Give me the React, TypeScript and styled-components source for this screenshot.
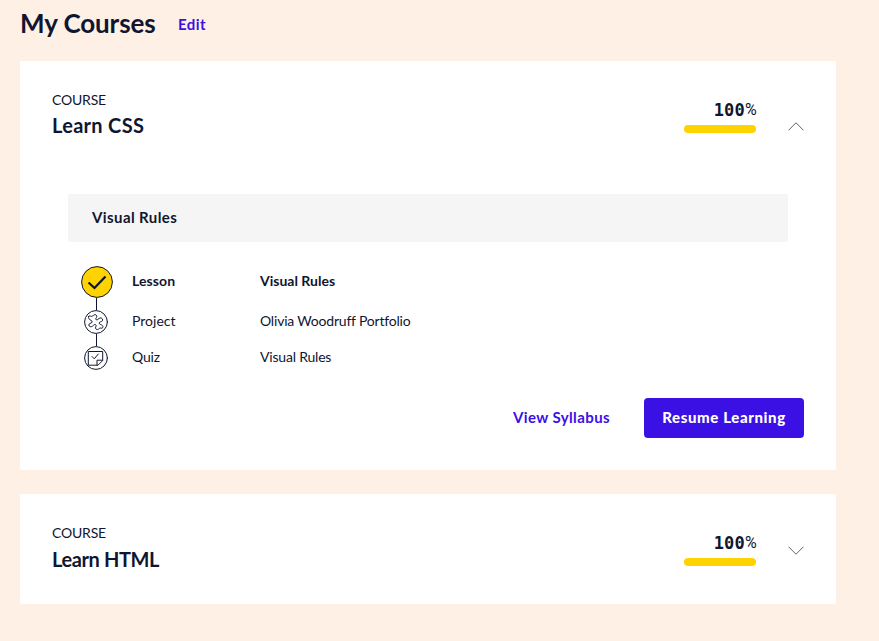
import React from 'react';
import styled, { createGlobalStyle } from 'styled-components';

const navy = '#10162f';
const blue = '#3a10e5';
const yellow = '#ffd300';

const GlobalStyle = createGlobalStyle`
  * { box-sizing: border-box; }
  body {
    margin: 0;
    background: #fff0e5;
    color: ${navy};
    font-family: Lato, "Liberation Sans", sans-serif;
  }
`;

const Page = styled.main`
  width: 879px;
  height: 641px;
  padding: 0 43px 0 20px;
  overflow: hidden;
`;

const Text = styled.span<{ $size: number; $weight?: number; $spacing?: number }>`
  font-size: ${p => p.$size}px;
  font-weight: ${p => p.$weight ?? 400};
  letter-spacing: ${p => p.$spacing ?? 0}px;
  white-space: nowrap;
`;

const Heading = styled.header`
  display: flex;
  align-items: center;
  height: 61px;
  padding-bottom: 13px;
`;

const Title = styled(Text)`
  width: 158px;
  margin: 0;
  padding-bottom: 2px;
  line-height: 46px;
`;

const LinkText = styled(Text)`
  color: ${blue};
`;

const Card = styled.section<{ $height: number }>`
  height: ${p => p.$height}px;
  margin-bottom: 24px;
  padding: 0 32px;
  background: #fff;
  border-radius: 2px;
`;

const CardHeader = styled.div<{ $open: boolean }>`
  display: flex;
  height: 110px;
  padding-top: 30px;
  margin-bottom: ${p => (p.$open ? 23 : 0)}px;
`;

const CourseName = styled.div<{ $gap: number }>`
  display: flex;
  flex: 1;
  flex-direction: column;
  line-height: 18px;
  gap: ${p => p.$gap}px;
`;

const Progress = styled.div`
  display: flex;
  flex-direction: column;
  align-items: flex-end;
  width: 72px;
  padding-top: 9px;
`;

const Percent = styled.span`
  display: flex;
  height: 25px;
  font: 700 17px/20px "DejaVu Sans Mono", monospace;
  letter-spacing: 0.2px;
`;

const PercentSign = styled.span`
  width: 11px;
  font: 400 16px/20px Roboto, sans-serif;
  letter-spacing: -1px;
`;

const Bar = styled.div`
  width: 72px;
  height: 8px;
  border-radius: 4px;
  background: ${yellow};
`;

const Chevron = styled.svg<{ $open: boolean }>`
  width: 16px;
  height: 9px;
  margin: ${p => (p.$open ? 31 : 22)}px 0 0 32px;
  fill: none;
  stroke: #5f626d;
  transform: ${p => (p.$open ? 'none' : 'scaleY(-1)')};
`;

const ModuleTitle = styled.h3`
  display: flex;
  align-items: center;
  height: 48px;
  margin: 0 16px 24px;
  padding: 0 0 2px 24px;
  background: #f5f5f5;
  border-radius: 2px;
`;

const Lessons = styled.div`
  display: grid;
  grid-template-columns: 32px 109px 1fr;
  column-gap: 19px;
  margin-left: 29px;
`;

const Steps = styled.div`
  display: flex;
  flex-direction: column;
  align-items: center;
`;

const CompletedIcon = styled.svg`
  display: block;
  width: 32px;
  height: 32px;
  fill: none;
  stroke: ${navy};
`;

const Connector = styled.div`
  width: 1px;
  height: 12px;
  margin-right: 1px;
  background: ${navy};
`;

const SmallIcon = styled.svg`
  display: block;
  width: 24px;
  height: 24px;
  margin-right: 2px;
  fill: none;
  stroke: ${navy};
  stroke-linejoin: round;
  stroke-linecap: round;
`;

const Column = styled.div`
  display: grid;
  grid-template-rows: 28px 52px 20px;
  align-items: center;
  height: 104px;
`;

const Actions = styled.div`
  display: flex;
  align-items: center;
  justify-content: flex-end;
  gap: 34px;
  margin-top: 28px;
`;

const SyllabusLink = styled(LinkText)`
  padding-bottom: 2px;
`;

const ResumeButton = styled.button`
  width: 160px;
  height: 40px;
  padding: 0 0 2px;
  border: 0;
  border-radius: 4px;
  color: #fff;
  background: ${blue};
  font-family: inherit;
`;

function CourseHeader({ name, open = false, spacing }: { name: string; open?: boolean; spacing: number }) {
  return (
    <CardHeader $open={open}>
      <CourseName $gap={open ? 7 : 8}>
        <Text $size={14} $spacing={-0.2}>COURSE</Text>
        <Text $size={20} $weight={700} $spacing={spacing}>{name}</Text>
      </CourseName>
      <Progress>
        <Percent>100<PercentSign>%</PercentSign></Percent>
        <Bar />
      </Progress>
      <Chevron $open={open} viewBox="0 0 16 9"><path d="M.5 8.3 8 .8l7.5 7.5" /></Chevron>
    </CardHeader>
  );
}

export default function App() {
  return (
    <>
      <GlobalStyle />
      <Page>
        <Heading>
          <Title as="h1" $size={26} $weight={700} $spacing={-0.1}>My Courses</Title>
          <LinkText $size={15} $weight={700} $spacing={0.4}>Edit</LinkText>
        </Heading>
        <Card $height={409}>
          <CourseHeader name="Learn CSS" open spacing={0.3} />
          <ModuleTitle><Text $size={15} $weight={700} $spacing={0.4}>Visual Rules</Text></ModuleTitle>
          <Lessons>
            <Steps>
              <CompletedIcon viewBox="0 0 32 32">
                <circle cx="16" cy="16" r="15.4" fill={yellow} />
                <path d="m7.5 16.5 6 5.5L24.5 10.5" strokeWidth="2.3" />
              </CompletedIcon>
              <Connector />
              <SmallIcon viewBox="0 0 24 24">
                <circle cx="12" cy="12" r="11.4" />
                <path d="M4.6 6.4C5.7 4.9 7.4 7.2 8.8 6C9.4 5.2 10.8 4.1 12.1 5C13.6 6.1 12.6 7.3 11.9 8.3C11.3 9.6 12.8 10.6 14 9.4C15.2 7.8 17.1 7.3 18.3 8.8C19.4 10.5 17.9 11.6 16.5 11.8C14.7 12.2 14.9 14 16.3 14.4C18 14.9 19.5 16 18.8 17.5C17.9 19.3 16.4 17.2 15.3 18.4C14.3 19.6 12.9 20.1 11.8 18.8C10.9 17.5 12.4 16.4 12.1 15.3C11.5 13.9 10.1 14.4 9.4 15.4C8.3 16.6 6.4 17.4 5.2 16C4.1 14.4 5.7 13.4 7 13C8.6 12.4 8.6 11.2 7.2 10.6C5.7 9.9 3.9 8.2 4.6 6.4Z" />
              </SmallIcon>
              <Connector />
              <SmallIcon viewBox="0 0 24 24">
                <circle cx="12" cy="12" r="11.4" />
                <path d="M4.7 5.5h14v9L14 19.2H4.7Zm8.3 13.5v-4.8h5.5M8 10.5l2.3 2.3 4-4.8" />
              </SmallIcon>
            </Steps>
            <Column>
              <Text $size={14} $weight={700} $spacing={0.1}>Lesson</Text>
              <Text $size={14}>Project</Text>
              <Text $size={14} $spacing={-0.2}>Quiz</Text>
            </Column>
            <Column>
              <Text $size={14} $weight={700}>Visual Rules</Text>
              <Text $size={14} $spacing={-0.2}>Olivia Woodruff Portfolio</Text>
              <Text $size={14} $spacing={-0.2}>Visual Rules</Text>
            </Column>
          </Lessons>
          <Actions>
            <SyllabusLink $size={15} $weight={700} $spacing={0.4}>View Syllabus</SyllabusLink>
            <ResumeButton><Text $size={15} $weight={900} $spacing={0.6}>Resume Learning</Text></ResumeButton>
          </Actions>
        </Card>
        <Card $height={110}>
          <CourseHeader name="Learn HTML" spacing={-0.4} />
        </Card>
      </Page>
    </>
  );
}
